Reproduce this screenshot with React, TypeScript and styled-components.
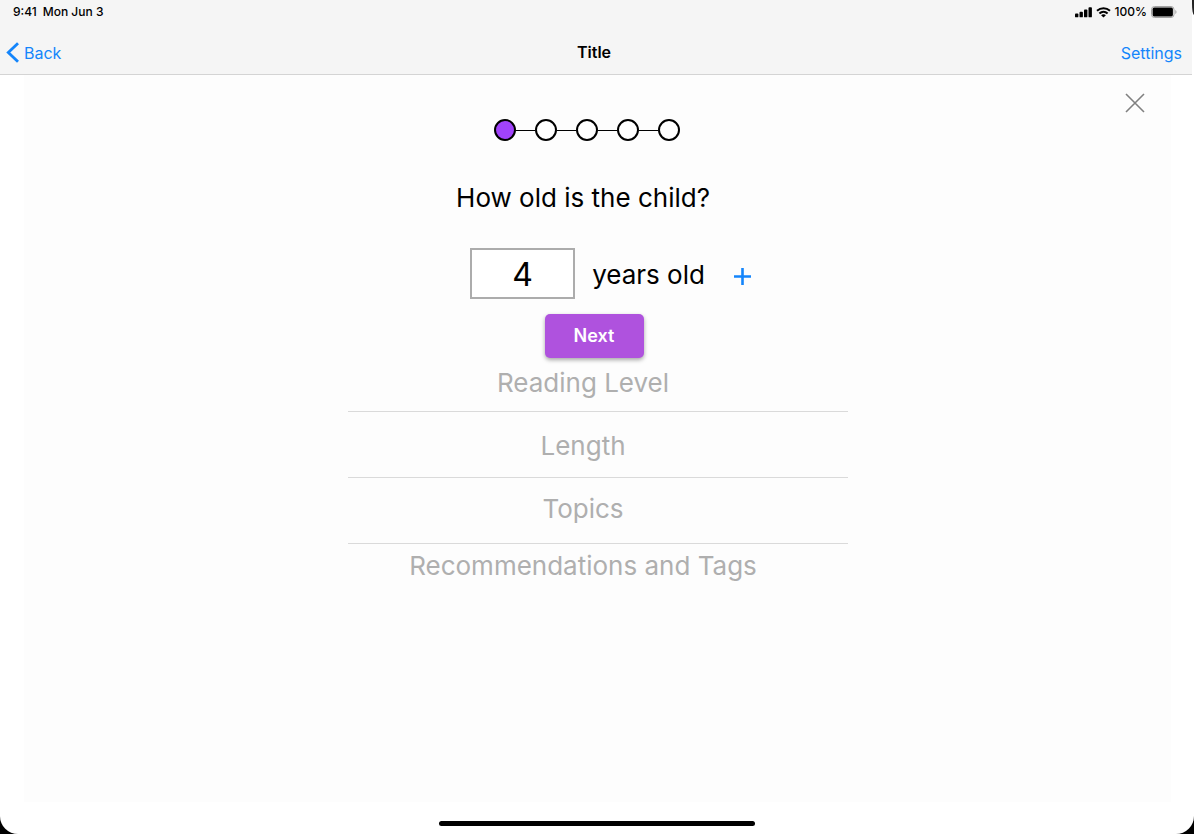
import React, { useState } from "react";
import styled, { createGlobalStyle } from "styled-components";

const GlobalStyle = createGlobalStyle`
  *, *::before, *::after { box-sizing: border-box; }
  body {
    margin: 0;
    background: #000;
    color: #000;
    font-family: Inter, "Liberation Sans", sans-serif;
  }
  h1, h2, p, ol { margin: 0; padding: 0; }
  ol { list-style: none; }
  button { border: 0; padding: 0; background: none; font: inherit; cursor: pointer; }
`;

const Screen = styled.div`
  position: relative;
  display: flex;
  flex-direction: column;
  min-height: 100vh;
  overflow: hidden;
  background: #fff;
  border-radius: 0 0 18px 18px;
`;

const BezelEdge = styled.div`
  position: absolute;
  top: 0;
  right: 0;
  width: 2px;
  height: 15px;
  background: #222;
  border-bottom-left-radius: 2px 12px;
`;

const Header = styled.header`
  margin-right: 2px;
  background: #f5f5f5;
  border-bottom: 1px solid #d4d4d4;
`;

const StatusBar = styled.div`
  display: flex;
  justify-content: space-between;
  align-items: center;
  height: 24px;
  padding: 0 15px 0 13px;
  font-size: 12px;
  font-weight: 500;
  line-height: 16px;
`;

const StatusGroup = styled.div<{ $gap: number }>`
  display: flex;
  align-items: center;
  gap: ${({ $gap }) => $gap}px;
`;

const NavBar = styled.nav`
  display: grid;
  grid-template-columns: 1fr auto 1fr;
  align-items: center;
  height: 50px;
  padding: 6px 10px 0 6px;
`;

const NavLink = styled.a<{ $end?: boolean }>`
  display: flex;
  align-items: center;
  gap: 4px;
  justify-self: ${({ $end }) => ($end ? "end" : "start")};
  padding-top: 2px;
  color: #1485fb;
  font-size: 16px;
  line-height: 24px;
  text-decoration: none;
`;

const Title = styled.h1`
  font-size: 16px;
  font-weight: 600;
  line-height: 22px;
`;

const Panel = styled.main`
  flex: 1;
  display: flex;
  flex-direction: column;
  align-items: center;
  margin: 0 23px 32px 24px;
  padding: 18px 0 24px;
  background: #fdfdfd;
`;

const PanelTop = styled.div`
  display: flex;
  justify-content: flex-end;
  width: 100%;
  padding-right: 26px;
`;

const IconButton = styled.button`
  display: flex;
`;

const Form = styled.form`
  display: flex;
  flex-direction: column;
  align-items: center;
  width: 100%;
  max-width: 500px;
  margin-left: 1px;
`;

const Steps = styled.ol`
  display: flex;
  align-items: center;
  margin: 6px 22px 0 0;
`;

const Step = styled.li<{ $active: boolean }>`
  display: flex;
  align-items: center;

  &:not(:first-child)::before {
    content: "";
    width: 19px;
    height: 1px;
    background: #000;
  }

  &::after {
    content: "";
    width: 22px;
    height: 22px;
    border: 2px solid #000;
    border-radius: 50%;
    background: ${({ $active }) => ($active ? "#a143fb" : "#fff")};
  }
`;

const Question = styled.label`
  margin: 41px 30px 0 0;
  font-size: 26px;
  line-height: 32px;
`;

const AgeRow = styled.div`
  display: flex;
  align-items: center;
  margin: 34px 0 0 26px;
`;

const AgeInput = styled.input`
  width: 105px;
  height: 51px;
  padding: 2px 0 0;
  border: 2px solid #acacac;
  border-radius: 0;
  background: #fff;
  color: #000;
  font: inherit;
  font-size: 32px;
  text-align: center;
`;

const Unit = styled.span`
  margin: 0 28px 0 17px;
  padding-top: 2px;
  font-size: 26px;
  line-height: 32px;
`;

const AddButton = styled(IconButton)`
  padding-top: 5px;
`;

const NextButton = styled.button`
  width: 99px;
  height: 44px;
  margin: 15px 8px 0 0;
  border-radius: 5px;
  background: #af52de;
  box-shadow: 0 2px 4px rgba(0, 0, 0, 0.35);
  color: #fff;
  font-size: 18px;
  font-weight: 600;
  line-height: 24px;
`;

const Sections = styled.ol`
  width: 100%;
`;

const Section = styled.li<{ $height: number; $top: number }>`
  height: ${({ $height }) => $height}px;
  padding: ${({ $top }) => $top}px 30px 0 0;
  color: #afafaf;
  text-align: center;

  &:not(:last-child) {
    border-bottom: 1px solid #dadada;
  }
`;

const SectionTitle = styled.h2`
  font-size: 26px;
  font-weight: 400;
  line-height: 32px;
`;

const HomeIndicator = styled.div`
  position: absolute;
  bottom: 8px;
  left: 50%;
  width: 316px;
  height: 5px;
  border-radius: 3px;
  background: #000;
  transform: translateX(-50%);
`;

const SignalIcon = () => (
  <svg width="17" height="11" viewBox="0 0 17 11" aria-hidden="true">
    <rect x="0" y="6.5" width="3.4" height="3.8" rx="0.9" />
    <rect x="4.5" y="4.8" width="3.4" height="5.5" rx="0.9" />
    <rect x="9" y="2.6" width="3.4" height="7.7" rx="0.9" />
    <rect x="13.5" y="0.2" width="3.4" height="10.1" rx="0.9" />
  </svg>
);

const WifiIcon = () => (
  <svg width="15" height="11" viewBox="0 0 15 11" fill="none" stroke="#000" strokeWidth="2" aria-hidden="true">
    <path d="M1 3.8C4.8 .4 10.2 .4 14 3.8" />
    <path d="M3.4 6.5c2.4-2.2 5.8-2.2 8.2 0" />
    <path d="M7.5 10.5 5.1 8.2c1.3-1.2 3.5-1.2 4.8 0Z" fill="#000" stroke="none" />
  </svg>
);

const BatteryIcon = () => (
  <svg width="26" height="12" viewBox="0 0 26 12" aria-hidden="true">
    <rect x="0.5" y="0.5" width="22.5" height="11" rx="3" fill="none" stroke="#a3a3a3" />
    <rect x="1.6" y="1.6" width="20.3" height="8.8" rx="1.6" />
    <path d="M24.3 4c1.6.6 1.6 3.4 0 4Z" fill="#a3a3a3" />
  </svg>
);

const BackIcon = () => (
  <svg width="14" height="22" viewBox="0 0 14 22" fill="none" stroke="#1485fb" strokeWidth="2.8" aria-hidden="true">
    <path d="M12 1.2 2.3 10.5l9.7 9.3" />
  </svg>
);

const CloseIcon = () => (
  <svg width="20" height="20" viewBox="0 0 20 20" fill="none" stroke="#808080" strokeWidth="1.6" aria-hidden="true">
    <path d="m1 1 18 18M19 1 1 19" />
  </svg>
);

const PlusIcon = () => (
  <svg width="19" height="19" viewBox="0 0 19 19" fill="none" stroke="#1485fb" strokeWidth="2.6" aria-hidden="true">
    <path d="M9.5 1v17M1 9.5h17" />
  </svg>
);

const steps = ["Age", "Reading Level", "Length", "Topics", "Recommendations and Tags"];

const sections = [
  { name: steps[1], height: 54, top: 9 },
  { name: steps[2], height: 66, top: 18 },
  { name: steps[3], height: 66, top: 15 },
  { name: steps[4], height: 50, top: 6 },
];

export default function App() {
  const [age, setAge] = useState("4");

  return (
    <>
      <GlobalStyle />
      <Screen>
        <Header>
          <StatusBar>
            <StatusGroup $gap={6}>
              <span>9:41</span>
              <span>Mon Jun 3</span>
            </StatusGroup>
            <StatusGroup $gap={4}>
              <SignalIcon />
              <WifiIcon />
              <span>100%</span>
              <BatteryIcon />
            </StatusGroup>
          </StatusBar>
          <NavBar>
            <NavLink href="#back">
              <BackIcon />
              Back
            </NavLink>
            <Title>Title</Title>
            <NavLink href="#settings" $end>
              Settings
            </NavLink>
          </NavBar>
        </Header>
        <BezelEdge />

        <Panel>
          <PanelTop>
            <IconButton type="button" aria-label="Close">
              <CloseIcon />
            </IconButton>
          </PanelTop>
          <Form onSubmit={(event) => event.preventDefault()}>
            <Steps>
              {steps.map((step, index) => (
                <Step key={step} $active={index === 0} aria-label={step} />
              ))}
            </Steps>
            <Question htmlFor="age">How old is the child?</Question>
            <AgeRow>
              <AgeInput
                id="age"
                inputMode="numeric"
                value={age}
                onChange={(event) => setAge(event.target.value)}
              />
              <Unit>years old</Unit>
              <AddButton type="button" aria-label="Add another child">
                <PlusIcon />
              </AddButton>
            </AgeRow>
            <NextButton type="submit">Next</NextButton>
            <Sections>
              {sections.map(({ name, height, top }) => (
                <Section key={name} $height={height} $top={top}>
                  <SectionTitle>{name}</SectionTitle>
                </Section>
              ))}
            </Sections>
          </Form>
        </Panel>
        <HomeIndicator />
      </Screen>
    </>
  );
}
